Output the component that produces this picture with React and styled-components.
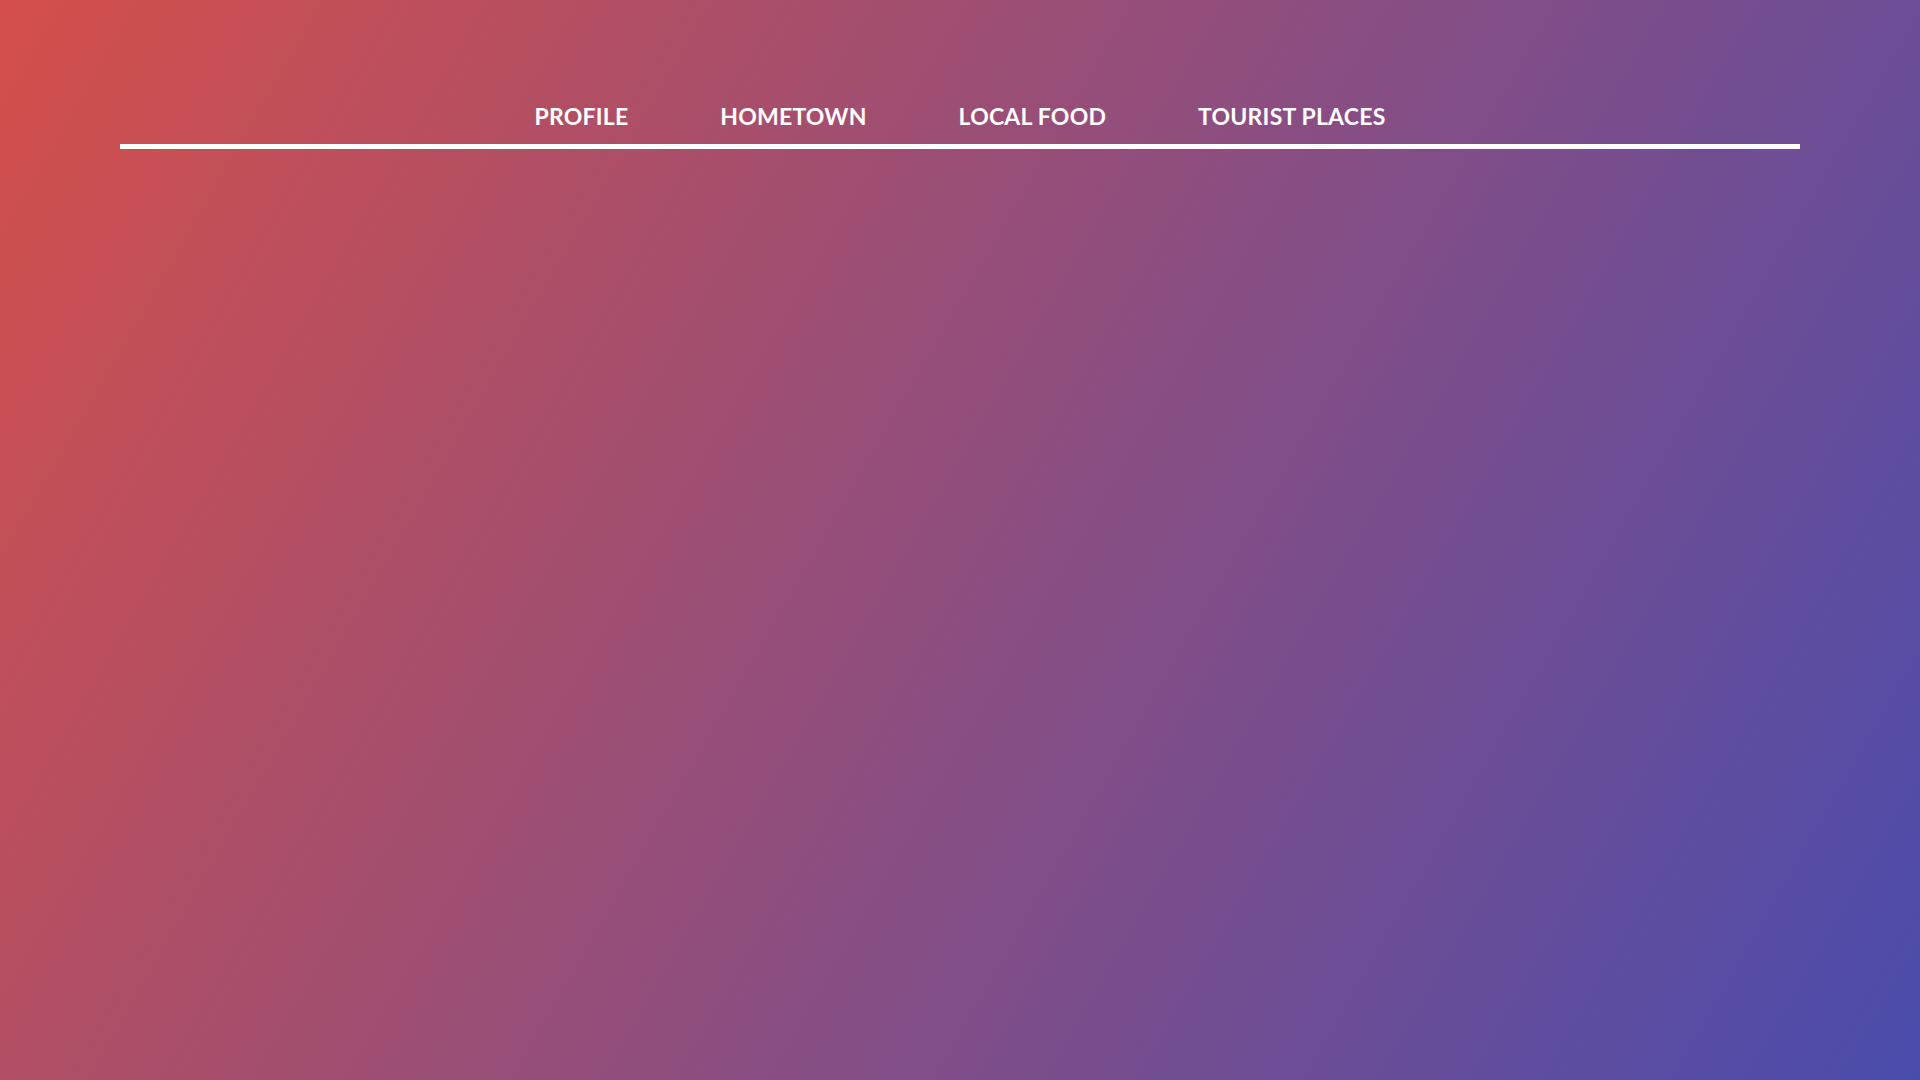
import React from "react";
import styled, { createGlobalStyle } from "styled-components";

const Global = createGlobalStyle`
  html, body { margin: 0; padding: 0; }
  body {
    min-height: 100vh;
    font-family: Lato, "Noto Sans", sans-serif;
    background: linear-gradient(120deg, #d44f4a 0%, #8f4e7e 50%, #4a4cad 100%);
    background-attachment: fixed;
  }
`;

const Page = styled.div`
  min-height: 100vh;
  padding: 0 120px;
  box-sizing: border-box;
`;

const Nav = styled.nav`
  padding-top: 102px;
  border-bottom: 5px solid #ffffff;
`;

const Menu = styled.ul`
  list-style: none;
  margin: 0;
  padding: 0 0 14px;
  display: flex;
  justify-content: center;
  gap: 92px;
`;

const Item = styled.li`
  color: #ffffff;
  font-weight: 700;
  font-size: 23px;
  line-height: 28px;
  letter-spacing: 0.2px;
  text-transform: uppercase;
`;

export default function App() {
  const items = ["Profile", "Hometown", "Local Food", "Tourist Places"];
  return (
    <>
      <Global />
      <Page>
        <Nav>
          <Menu>
            {items.map((t) => (
              <Item key={t}>{t}</Item>
            ))}
          </Menu>
        </Nav>
      </Page>
    </>
  );
}
